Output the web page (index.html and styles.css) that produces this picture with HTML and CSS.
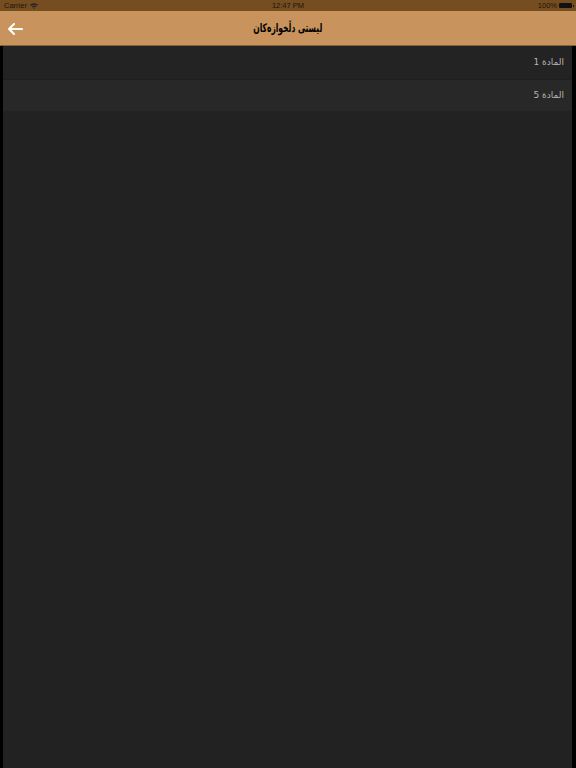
FILE: index.html
```html
<!DOCTYPE html>
<html lang="ckb">
<head>
  <meta charset="UTF-8">
  <meta name="viewport" content="width=device-width, initial-scale=1.0">
  <title>ليستى دڵخوازەكان</title>
  <link rel="stylesheet" href="styles.css">
</head>
<body>
  <div class="statusbar">
    <div class="status-left">
      Carrier
      <svg class="wifi" width="8" height="6" viewBox="0 0 8 6">
        <path d="M0 2 A5.5 5.5 0 0 1 8 2 L7 3 A4 4 0 0 0 1 3 Z M1.8 3.6 A3 3 0 0 1 6.2 3.6 L5.3 4.5 A1.8 1.8 0 0 0 2.7 4.5 Z M3.2 5.1 A1 1 0 0 1 4.8 5.1 L4 6 Z" fill="#222"/>
      </svg>
    </div>
    <div class="status-time">12:47 PM</div>
    <div class="status-right">
      100%
      <span class="battery"><span class="battery-tip"></span></span>
    </div>
  </div>

  <header class="navbar">
    <svg class="back" width="16" height="12" viewBox="0 0 16 12">
      <path d="M15 6 H2 M7 1 L2 6 L7 11" stroke="#fff" stroke-width="2" fill="none" stroke-linecap="round" stroke-linejoin="round"/>
    </svg>
    <h1 class="title" dir="rtl">ليستى دڵخوازەكان</h1>
  </header>

  <div class="content">
    <ul class="list" dir="rtl">
      <li class="row">المادة 1</li>
      <li class="row alt">المادة 5</li>
    </ul>
  </div>
</body>
</html>
```

FILE: styles.css
```css
* {
  box-sizing: border-box;
}
html, body {
  height: 100%;
}
body {
  margin: 0;
  background: #000;
  font-family: 'DejaVu Sans', 'Liberation Sans', sans-serif;
  display: flex;
  flex-direction: column;
}
.statusbar {
  height: 11px;
  background: #754d21;
  color: #1e1408;
  font-family: 'Liberation Sans', sans-serif;
  font-size: 7.5px;
  display: flex;
  align-items: center;
  justify-content: space-between;
  padding: 0 4px;
}
.status-left, .status-right {
  width: 80px;
  display: flex;
  align-items: center;
  gap: 3px;
}
.status-right {
  justify-content: flex-end;
  gap: 2px;
}
.battery {
  width: 13px;
  height: 5px;
  background: #111;
  border-radius: 1px;
  position: relative;
}
.battery-tip {
  position: absolute;
  right: -2px;
  top: 1.5px;
  width: 1px;
  height: 2px;
  background: #111;
}
.navbar {
  height: 35px;
  background: #c8935c;
  border-bottom: 1px solid #8a6238;
  display: flex;
  align-items: center;
  justify-content: center;
  position: relative;
}
.back {
  position: absolute;
  left: 7px;
  top: 12px;
}
.title {
  margin: 0;
  font-size: 12px;
  font-weight: bold;
  color: #000;
  transform: scaleX(0.63);
}
.content {
  flex: 1;
  background: #222;
  margin: 0 4px 0 3px;
}
.list {
  list-style: none;
  margin: 0;
  padding: 0;
}
.row {
  height: 34px;
  line-height: 33px;
  padding: 0 8px;
  font-size: 9px;
  color: #b4b4b4;
  background: #232323;
  border-bottom: 1px solid #1f1f1f;
}
.row.alt {
  height: 31px;
  line-height: 31px;
  background: #282828;
  border-bottom: none;
}
```
